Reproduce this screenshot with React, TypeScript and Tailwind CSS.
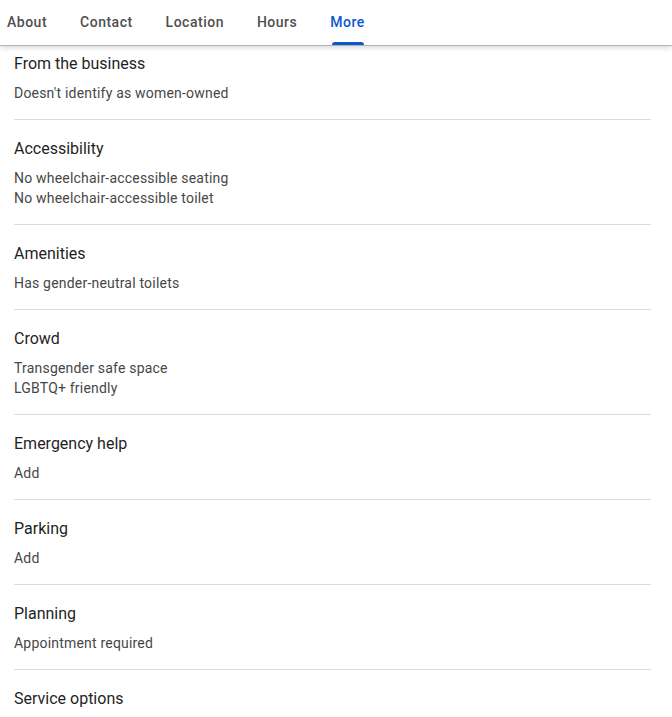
import React from 'react';

interface Section {
  title: string;
  lines: string[];
}

const tabs = ['About', 'Contact', 'Location', 'Hours', 'More'];

const sections: Section[] = [
  { title: 'From the business', lines: ["Doesn't identify as women-owned"] },
  {
    title: 'Accessibility',
    lines: ['No wheelchair-accessible seating', 'No wheelchair-accessible toilet'],
  },
  { title: 'Amenities', lines: ['Has gender-neutral toilets'] },
  { title: 'Crowd', lines: ['Transgender safe space', 'LGBTQ+ friendly'] },
  { title: 'Emergency help', lines: ['Add'] },
  { title: 'Parking', lines: ['Add'] },
  { title: 'Planning', lines: ['Appointment required'] },
  { title: 'Service options', lines: [] },
];

const App: React.FC = () => {
  return (
    <div
      className="h-[717px] w-[672px] overflow-hidden bg-white"
      style={{ fontFamily: 'Roboto, "Noto Sans", Arial, sans-serif' }}
    >
      {/* Tab bar */}
      <div className="relative z-10 flex h-[46px] items-stretch gap-[33px] border-b border-[#b4b4b4] bg-white pl-[7px] shadow-[0_2px_5px_rgba(0,0,0,0.15)]">
        {tabs.map((tab) => {
          const active = tab === 'More';
          return (
            <div
              key={tab}
              className={`relative flex items-center text-[14px] font-medium tracking-[0.5px] ${
                active ? 'text-[#0b57d0]' : 'text-[#4f4f4f]'
              }`}
            >
              {tab}
              {active && (
                <span className="absolute bottom-0 left-[2px] right-[1px] h-[3px] rounded-t-[3px] bg-[#0b57d0]" />
              )}
            </div>
          );
        })}
      </div>

      {/* Sections */}
      <div className="pl-[14px] pr-[21px]">
        {sections.map((section, i) => (
          <div
            key={section.title}
            className={`flex flex-col gap-[7px] pb-[16px] ${
              i === 0 ? 'pt-[6px]' : 'border-t border-[#dadce0] pt-[17px]'
            }`}
          >
            <h2 className="text-[16px] leading-6 text-[#1f1f1f]">{section.title}</h2>
            {section.lines.length > 0 && (
              <div className="text-[14px] leading-5 tracking-[0.2px] text-[#474747]">
                {section.lines.map((line) => (
                  <div key={line}>{line}</div>
                ))}
              </div>
            )}
          </div>
        ))}
      </div>
    </div>
  );
};

export default App;
